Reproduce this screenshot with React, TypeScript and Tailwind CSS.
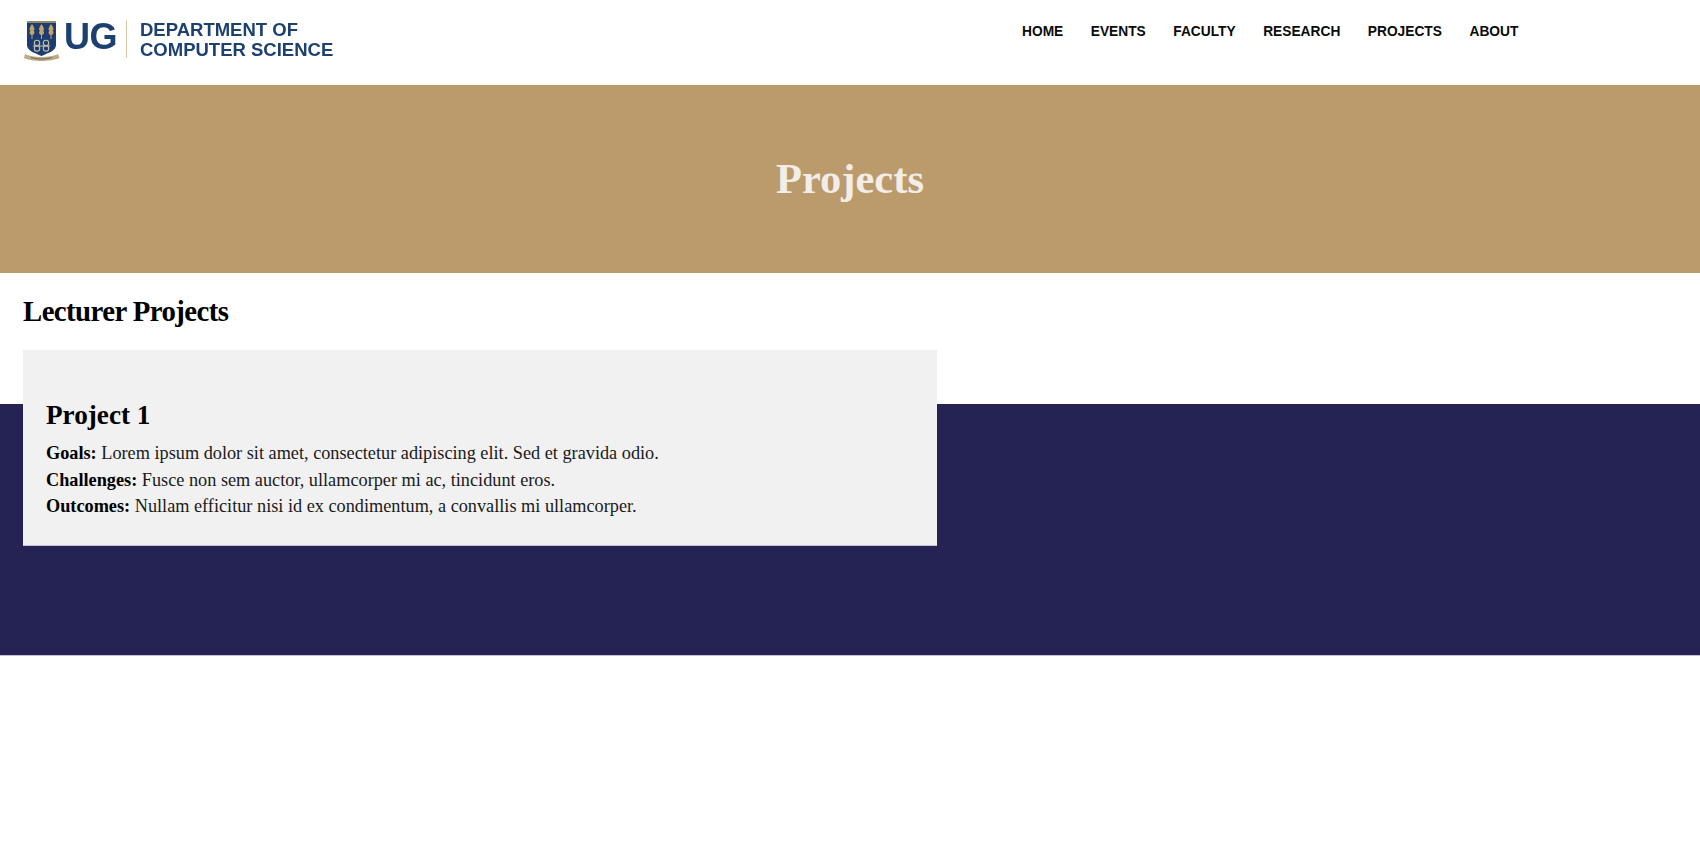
import React from "react";

const nav = ["HOME", "EVENTS", "FACULTY", "RESEARCH", "PROJECTS", "ABOUT"];

function Crest() {
  return (
    <svg width="36" height="42" viewBox="0 0 36 42" className="shrink-0 blur-[0.4px]">
      <path d="M3 1H32V25C32 31 24 33 17.500 36C11 33 3 31 3 25Z" fill="#1c3d6e" />
      <rect x="3" y="1" width="29" height="2" fill="#8f8a6c" />
      <g fill="#c2a36c">
        <path d="M8 4C9.500 6 10.500 8 10.500 10L9.500 10.500L10.500 12C10.500 14 9.500 15 8 15C6.500 15 5.500 14 5.500 12L6.500 10.500L5.500 10C5.500 8 6.500 6 8 4Z" />
        <path d="M17.500 4C19 6 20 8 20 10L19 10.500L20 12C20 14 19 15 17.500 15C16 15 15 14 15 12L16 10.500L15 10C15 8 16 6 17.500 4Z" />
        <path d="M27 4C28.500 6 29.500 8 29.500 10L28.500 10.500L29.500 12C29.500 14 28.500 15 27 15C25.500 15 24.500 14 24.500 12L25.500 10.500L24.500 10C24.500 8 25.500 6 27 4Z" />
        <rect x="7.500" y="14" width="1" height="5" />
        <rect x="17" y="14" width="1" height="5" />
        <rect x="26.500" y="14" width="1" height="5" />
      </g>
      <g fill="none" stroke="#c4c0a8" strokeWidth="1.100">
        <circle cx="13" cy="23" r="2.700" />
        <circle cx="22" cy="23" r="2.700" />
        <circle cx="13" cy="28.500" r="2.700" />
        <circle cx="22" cy="28.500" r="2.700" />
        <path d="M9 26H26" />
      </g>
      <path d="M1 34C8 38 27 38 34 34L35.500 38C27 42 8 42 0 38Z" fill="#bcaa84" />
      <path d="M7 37.500C14 39.500 21 39.500 28 37.500" fill="none" stroke="#6f6a50" strokeWidth="1" />
    </svg>
  );
}

export default function App() {
  return (
    <div className="min-h-[857px] bg-white font-['Liberation_Serif',serif] text-black">
      <header className="h-[85px] flex items-start bg-white">
        <div className="w-[1000px] pl-[24px] pt-[20px] flex items-start font-['Liberation_Sans',sans-serif] text-[#1c4070]">
          <Crest />
          <span className="ml-[4px] mt-[-2px] text-[36px] leading-[38px] font-bold tracking-[-0.5px] blur-[0.3px]">UG</span>
          <div className="ml-[9px] mt-[0px] w-px h-[38px] bg-[#d8c8a8]" />
          <div className="ml-[13px] mt-[0px] text-[18.500px] leading-[20px] font-bold whitespace-nowrap blur-[0.3px]">
            <div>DEPARTMENT OF</div>
            <div>COMPUTER SCIENCE</div>
          </div>
        </div>
        <nav className="ml-[22px] mt-[24px] flex gap-[27.500px] font-['Liberation_Sans',sans-serif] text-[13.750px] leading-[16px] font-bold">
          {nav.map((n) => (
            <a key={n} className="whitespace-nowrap text-[#0a0a0a]">{n}</a>
          ))}
        </nav>
      </header>

      <section className="h-[188px] flex items-center justify-center bg-[#bb9b6b]">
        <h1 className="text-[42.500px] leading-[48px] font-bold text-[#f2ede8]">Projects</h1>
      </section>

      <main className="h-[131px] px-[23px]">
        <h2 className="pt-[22px] h-[77px] text-[28.800px] leading-[32px] font-bold tracking-[-0.57px]">Lecturer Projects</h2>
        <article className="relative z-10 w-[914px] h-[196px] bg-[#f1f1f1] border-b border-[#c4c3d6] px-[23px] pt-[49px]">
          <h3 className="text-[27.200px] leading-[32px] font-bold">Project 1</h3>
          <div className="mt-[9px] text-[18.250px] leading-[26.500px] text-[#1a1a1a]">
            <p><strong className="text-black">Goals:</strong> Lorem ipsum dolor sit amet, consectetur adipiscing elit. Sed et gravida odio.</p>
            <p><strong className="text-black">Challenges:</strong> Fusce non sem auctor, ullamcorper mi ac, tincidunt eros.</p>
            <p><strong className="text-black">Outcomes:</strong> Nullam efficitur nisi id ex condimentum, a convallis mi ullamcorper.</p>
          </div>
        </article>
      </main>

      <footer className="h-[252px] bg-[#252353] border-b border-[#c4c3d6]" />
    </div>
  );
}
